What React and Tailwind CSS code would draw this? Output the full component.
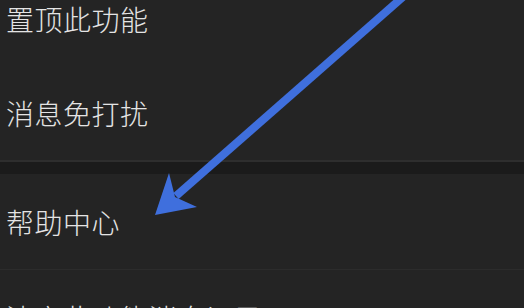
import React from "react";

const font = { fontFamily: '"Noto Sans CJK SC", "Noto Sans", sans-serif' };

function Row({ label, h = "h-[94px]", divider }) {
  return (
    <div className={`${h} shrink-0 flex items-center px-[6px] ${divider ? "border-b border-[#2c2c2c]" : ""}`}>
      <span className="text-[28px] leading-none font-light text-[#e4e4e4] tracking-[0.5px]">{label}</span>
    </div>
  );
}

export default function App() {
  return (
    <div className="relative w-[524px] h-[308px] overflow-hidden bg-[#242424]" style={font}>
      <div className="flex flex-col mt-[-28px]">
        <Row label="置顶此功能" />
        <Row label="消息免打扰" />
        <div className="h-[2px] bg-[#2e2e2e]" />
        <div className="h-[12px] bg-[#1b1b1b]" />
        <Row label="帮助中心" h="h-[96px]" divider />
        <Row label="清空此功能消息记录" h="h-[96px]" />
      </div>

      <svg className="absolute inset-0" width="524" height="308" viewBox="0 0 524 308">
        <line x1="404" y1="-4" x2="176" y2="196" stroke="#3f6fdd" strokeWidth="8" />
        <polygon points="155,215 169,173 175,197 197,207" fill="#3f6fdd" />
      </svg>
    </div>
  );
}
